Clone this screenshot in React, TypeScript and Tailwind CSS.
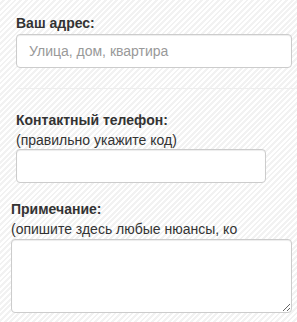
export default function App() {
  return (
    <div className="h-[322px] w-[297px] overflow-hidden bg-[repeating-linear-gradient(135deg,#ffffff_0,#ffffff_2px,#f2f2f2_2px,#f2f2f2_4px)] font-['Liberation_Sans',Arial,sans-serif] text-[14px] text-[#333]">
      {/* address */}
      <div className="pl-4 pt-[13px]">
        <label className="block text-[14px] font-bold leading-5">Ваш адрес:</label>
        <input
          type="text"
          placeholder="Улица, дом, квартира"
          className="mt-px block h-[34px] w-[276px] rounded-[4px] border border-[#ccc] bg-white px-3 text-[14px] text-[#555] shadow-[inset_0_1px_1px_rgba(0,0,0,0.075)] outline-none placeholder:text-[#999]"
        />
      </div>

      <div className="ml-4 mt-5 h-px bg-[#eee]" />

      {/* phone */}
      <div className="pl-4 pt-[21px]">
        <label className="block text-[14px] font-bold leading-5">Контактный телефон:</label>
        <div className="leading-5">(правильно укажите код)</div>
        <input
          type="text"
          className="-mt-px block h-[34px] w-[250px] rounded-[4px] border border-[#ccc] bg-white px-3 text-[14px] shadow-[inset_0_1px_1px_rgba(0,0,0,0.075)] outline-none"
        />
      </div>

      {/* note */}
      <div className="pl-[11px] pt-4">
        <label className="block text-[14px] font-bold leading-5">Примечание:</label>
        <div className="whitespace-nowrap leading-5">(опишите здесь любые нюансы, ко</div>
        <textarea className="block h-[74px] w-[281px] rounded-[4px] border border-[#ccc] bg-white px-3 py-1.5 text-[14px] shadow-[inset_0_1px_1px_rgba(0,0,0,0.075)] outline-none" />
      </div>
    </div>
  )
}
